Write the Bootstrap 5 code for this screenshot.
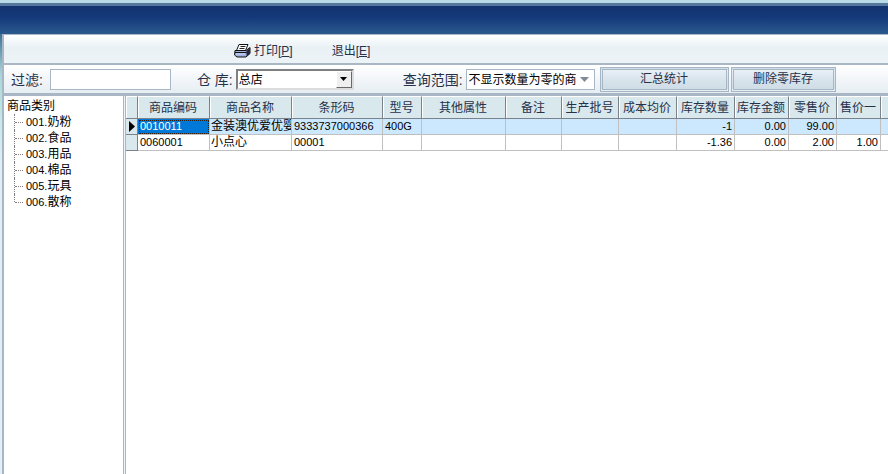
<!DOCTYPE html>
<html lang="zh-CN">
<head>
<meta charset="utf-8">
<meta name="viewport" content="width=device-width, initial-scale=1">
<title>库存查询</title>
<link href="https://cdn.jsdelivr.net/npm/bootstrap@5.3.0/dist/css/bootstrap.min.css" rel="stylesheet">
<style>
body{font:12px/16px "Liberation Sans","Noto Sans CJK SC",sans-serif;color:#000;background:#fff}
.top-edge{height:6px;background:#53789b;border-top:3px solid #b9dbe7}
.title-strip{height:28px;background:linear-gradient(#13336f,#14397a 40%,#2b5a8d)}
.frame{background:linear-gradient(#3d7299,#a9d6d6 40px,#c9eae9 90px,#dfeff5 130px,#e4eef5);padding-left:2px}
.inner{border-left:2px solid #a9b6c6;border-top:1px solid #a7b9ca;background:#fff}
.toolbar-row{height:28px;padding:3px 0 0 230px;gap:39px;background:linear-gradient(#fff,#e9f1f5 45%,#edf4f7)}
.tool{font-size:12px;line-height:16px;color:#26314a;gap:3px}
.filter-row{height:33px;border-top:2px solid #a9b6c3;border-bottom:3px solid #a9b6c6;background:linear-gradient(#fff,#f0f4f8 60%,#e6eef2);padding-left:7px}
.filter-row label{font-size:14px;line-height:18px;padding-top:2px;color:#26314a;white-space:pre}
.box{height:21px;border:1px solid #a9b6c6;border-radius:0;background:#fff;font-size:12px;line-height:16px;color:#000}
.filter-box{width:121px}
select.box{appearance:none;width:100%;padding:1px 18px 0 2px;display:block}
.combo-store{width:118px}
.combo-range{width:129px}
.combo-store select{border:2px solid;border-color:#808080 #dcdcdc #dcdcdc #808080;padding-left:1px}
.arrow{top:2px;right:2px;width:16px;height:17px;pointer-events:none}
.arrow-classic{background:#efefef;border:1px solid;border-color:#fff #696969 #696969 #fff}
.g-filter{gap:7px}
.g-search{margin-left:26px;gap:3px}
.g-range{margin-left:49px;gap:3px}
.g-push{margin-left:5px;gap:2px}
.push{height:25px;border:3px double #a7b6c4;border-radius:0;background:linear-gradient(#e9f0f6,#d9e4ec 50%,#cfdde6);color:#26314a;font-size:12px;line-height:16px;padding:0}
.push-sum{width:129px}
.push-del{width:105px}
.side{width:119px;padding:2px 0 0 3px;background:#fff}
.splitter{width:3px;background:#edf3f8;border:solid #a9b6c6;border-width:0 1px}
.tree{padding-left:7px}
.tree li{padding-left:12px;font-size:12px;height:16px;position:relative;white-space:nowrap}
.tree li::before{content:"";position:absolute;left:0;top:0;height:16px;border-left:1px dotted #808080}
.tree li:last-child::before{height:8px}
.tree li::after{content:"";position:absolute;left:1px;top:8px;width:8px;border-top:1px dotted #808080}
.num{font-size:11px}
.work{min-height:calc(100vh - 96px)}
.grid-table{table-layout:fixed;width:763px;border-collapse:separate;border-spacing:0}
.grid-table th,.grid-table td{padding:0 2px;white-space:nowrap;overflow:hidden;border:solid #c0c0c0;border-width:0 1px 1px 0;height:16px;line-height:15px}
.grid-table td:nth-child(3){padding-left:1px}
.grid-table thead th{height:23px;padding:2px 1px 0 0;text-align:center;font-weight:400;color:#26314a;background:#d9e8ec;border-color:#7c828c;border-top:1px solid #fff;box-shadow:inset 1px 0 #fff}
.grid-table tbody th{background:#d9e8ec;border-color:#7c828c;padding:0 0 0 3px}
.grid-table tbody th svg{display:block}
.picked td{background:#cce8ff}
.grid-table td.focus-cell{background:#0078d7;color:#fff;outline:1px dotted #331e0e;outline-offset:-2px}
.c12{width:12px}.c72{width:72px}.c82{width:82px}.c91{width:91px}.c39{width:39px}.c84{width:84px}.c56{width:56px}.c57{width:57px}.c58{width:58px}.c54{width:54px}.c48{width:48px}.c44{width:44px}
</style>
<script src="https://cdn.jsdelivr.net/npm/bootstrap@5.3.0/dist/js/bootstrap.bundle.min.js"></script>
</head>
<body class="overflow-hidden">
<header>
<div class="top-edge"></div>
<div class="title-strip"></div>
</header>
<div class="frame"><div class="inner">
<nav class="toolbar-row d-flex align-items-center">
<button type="button" class="tool btn border-0 p-0 d-flex align-items-center">
<svg width="17" height="16" viewBox="0 0 17 16" aria-hidden="true"><path d="M5 1.500h9l-2.500 6h-9z" fill="#fff" stroke="#111"/><path d="M6.500 3.500h5M5.500 5.500h5" stroke="#222"/><path d="M1 7.500h11l4-3v6l-4 3.500H3l-2.500-2z" fill="#9fb0dc" stroke="#111"/><path d="M1 9.500h11l4-3" fill="none" stroke="#111"/><path d="M2 11h9" stroke="#b4c4ee" stroke-width="2"/><path d="M12.500 8v5.500L16 10.500V5z" fill="#25283c"/></svg>
<span>打印[<u>P</u>]</span></button>
<button type="button" class="tool btn border-0 p-0">退出[<u>E</u>]</button>
</nav>
<form class="filter-row d-flex align-items-center">
<div class="g-filter d-flex align-items-center"><label for="flt">过滤:</label><input id="flt" type="text" class="box filter-box px-1"></div>
<div class="g-search d-flex align-items-center"><label for="store">仓 库:</label>
<div class="combo-store position-relative"><select id="store" class="box"><option>总店</option></select>
<span class="arrow arrow-classic position-absolute d-flex align-items-center justify-content-center"><svg width="7" height="4" viewBox="0 0 7 4"><path d="M0 0h7L3.500 4z"/></svg></span></div></div>
<div class="g-range d-flex align-items-center"><label for="range">查询范围:</label>
<div class="combo-range position-relative"><select id="range" class="box"><option>不显示数量为零的商品</option></select>
<span class="arrow position-absolute d-flex align-items-center justify-content-center"><svg width="9" height="5" viewBox="0 0 9 5"><path d="M0 0h9L4.500 5z" fill="#7e8a96"/></svg></span></div></div>
<div class="g-push d-flex"><button type="button" class="push push-sum">汇总统计</button><button type="button" class="push push-del">删除零库存</button></div>
</form>
<div class="work d-flex">
<aside class="side flex-shrink-0">
<div>商品类别</div>
<ul class="tree list-unstyled mb-0">
<li><span class="num">001.</span>奶粉</li><li><span class="num">002.</span>食品</li><li><span class="num">003.</span>用品</li><li><span class="num">004.</span>棉品</li><li><span class="num">005.</span>玩具</li><li><span class="num">006.</span>散称</li>
</ul>
</aside>
<div class="splitter flex-shrink-0"></div>
<main class="flex-grow-1 overflow-hidden">
<table class="grid-table">
<colgroup><col class="c12"><col class="c72"><col class="c82"><col class="c91"><col class="c39"><col class="c84"><col class="c56"><col class="c57"><col class="c58"><col class="c58"><col class="c54"><col class="c48"><col class="c44"><col></colgroup>
<thead><tr><th></th><th>商品编码</th><th>商品名称</th><th>条形码</th><th>型号</th><th>其他属性</th><th>备注</th><th>生产批号</th><th>成本均价</th><th>库存数量</th><th>库存金额</th><th>零售价</th><th>售价一</th><th></th></tr></thead>
<tbody>
<tr class="picked"><th><svg width="7" height="11" viewBox="0 0 7 11"><path d="M0 0l6 5.500L0 11z"/></svg></th><td class="num focus-cell">0010011</td><td>金装澳优爱优婴</td><td class="num">9333737000366</td><td class="num">400G</td><td></td><td></td><td></td><td></td><td class="num text-end">-1</td><td class="num text-end">0.00</td><td class="num text-end">99.00</td><td></td><td></td></tr>
<tr><th></th><td class="num">0060001</td><td>小点心</td><td class="num">00001</td><td></td><td></td><td></td><td></td><td></td><td class="num text-end">-1.36</td><td class="num text-end">0.00</td><td class="num text-end">2.00</td><td class="num text-end">1.00</td><td></td></tr>
</tbody></table>
</main>
</div>
</div></div>
</body>
</html>
